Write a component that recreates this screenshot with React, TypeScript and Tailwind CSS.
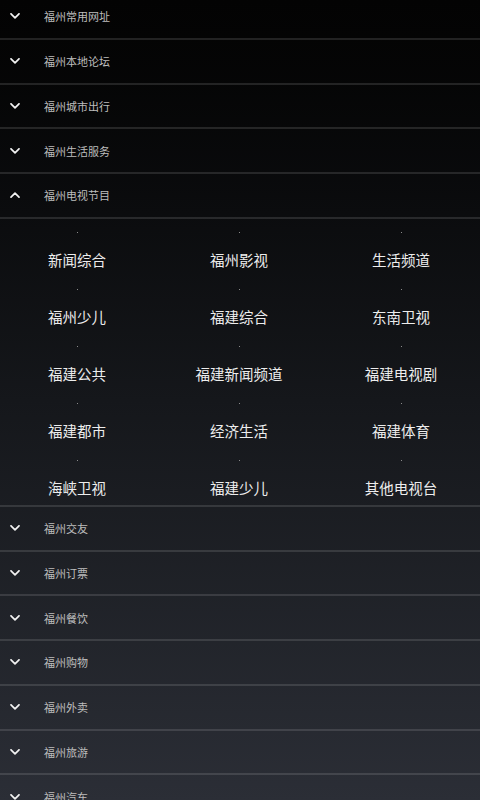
import React from "react";

const topRows = ["福州常用网址", "福州本地论坛", "福州城市出行", "福州生活服务"];
const bottomRows = ["福州交友", "福州订票", "福州餐饮", "福州购物", "福州外卖", "福州旅游", "福州汽车"];
const items = [
  "新闻综合", "福州影视", "生活频道",
  "福州少儿", "福建综合", "东南卫视",
  "福建公共", "福建新闻频道", "福建电视剧",
  "福建都市", "经济生活", "福建体育",
  "海峡卫视", "福建少儿", "其他电视台",
];

function Chevron({ up }: { up?: boolean }) {
  return (
    <svg width="10" height="6" viewBox="0 0 10 6" className="block">
      <path
        d={up ? "M1 5.2 L5 1.2 L9 5.2" : "M1 0.8 L5 4.8 L9 0.8"}
        fill="none"
        stroke="#f2f2f2"
        strokeWidth="1.7"
        strokeLinecap="round"
        strokeLinejoin="round"
      />
    </svg>
  );
}

function Header({ label, up }: { label: string; up?: boolean }) {
  return (
    <>
      <div className="flex h-[42.75px] items-center">
        <div className="flex w-[44px] justify-center pr-[16px] pl-[1px]">
          <Chevron up={up} />
        </div>
        <span className="text-[11px] leading-[16px] text-[#bdbdbd]">{label}</span>
      </div>
      <div className="h-[2px] bg-[#ffffff1f]" />
    </>
  );
}

export default function App() {
  return (
    <div
      className="h-[800px] w-[480px] overflow-hidden bg-gradient-to-b from-[#030303] via-[#15171b] to-[#2b2e36]"
      style={{ fontFamily: '"Noto Sans CJK SC", "Noto Sans", sans-serif' }}
    >
      <div className="-mt-[5px]">
        {topRows.map((r) => (
          <Header key={r} label={r} />
        ))}
        <Header label="福州电视节目" up />
        <div className="grid grid-cols-3 gap-x-[12px] pl-[2px] pr-[4px] pb-[1px]">
          {items.map((it) => (
            <div key={it} className="flex h-[57px] flex-col items-center pt-[13px]">
              <div className="h-[1px] w-[1px] bg-[#8a8a8a]" />
              <div className="mt-[17px] text-[14.5px] leading-[20px] text-[#ededed]">{it}</div>
            </div>
          ))}
        </div>
        <div className="h-[2px] bg-[#ffffff1f]" />
        {bottomRows.map((r) => (
          <Header key={r} label={r} />
        ))}
      </div>
    </div>
  );
}
